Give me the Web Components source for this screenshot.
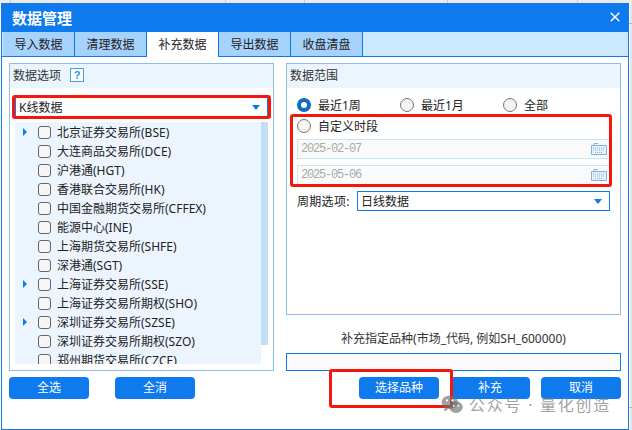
<!DOCTYPE html>
<html lang="zh">
<head>
<meta charset="utf-8">
<title>数据管理</title>
<style>
  html, body { margin: 0; height: 100%; overflow: hidden; }
  /* sheet behind the dialog: only its grid lines show round the edges */
  body { font: 12px "Noto Sans", "Noto Sans CJK SC", sans-serif; color: #222; background-color: #fff;
         background-image:
           linear-gradient(#ccc, #ccc), linear-gradient(#ccc, #ccc), linear-gradient(#ccc, #ccc),
           linear-gradient(#ccc, #ccc), linear-gradient(#ccc, #ccc),
           linear-gradient(#bbb, #bbb), linear-gradient(#bbb, #bbb),
           linear-gradient(#ececec, #ececec), linear-gradient(#e6e6e6, #e6e6e6);
         background-repeat: no-repeat;
         background-size: 1px 3px, 1px 3px, 1px 3px, 1px 3px, 1px 3px, 3px 1px, 3px 1px, 100% 3px, 2px 100%;
         background-position: 10px 0, 225px 0, 304px 0, 447px 0, 577px 0, 629px 23px, 629px 407px, 0 0, 630px 0; }
  data-dialog { margin: 3px 0 0 1px; }
</style>
</head>
<body>
<data-dialog heading="数据管理">
  <tab-bar slot="tabs" items="导入数据,清理数据,补充数据,导出数据,收盘清盘" active="2"></tab-bar>

  <group-panel slot="left" heading="数据选项" help>
    <combo-box wide text="K线数据"></combo-box>
    <market-tree>
      <tree-row arrow>北京证券交易所(BSE)</tree-row>
      <tree-row>大连商品交易所(DCE)</tree-row>
      <tree-row>沪港通(HGT)</tree-row>
      <tree-row>香港联合交易所(HK)</tree-row>
      <tree-row>中国金融期货交易所(CFFEX)</tree-row>
      <tree-row>能源中心(INE)</tree-row>
      <tree-row>上海期货交易所(SHFE)</tree-row>
      <tree-row>深港通(SGT)</tree-row>
      <tree-row arrow>上海证券交易所(SSE)</tree-row>
      <tree-row>上海证券交易所期权(SHO)</tree-row>
      <tree-row arrow>深圳证券交易所(SZSE)</tree-row>
      <tree-row>深圳证券交易所期权(SZO)</tree-row>
      <tree-row>郑州期货交易所(CZCE)</tree-row>
    </market-tree>
  </group-panel>

  <action-row slot="left-actions" gap="26">
    <blue-button>全选</blue-button>
    <blue-button>全消</blue-button>
  </action-row>

  <group-panel slot="right" heading="数据范围" tall>
    <range-form></range-form>
  </group-panel>

  <code-entry slot="right-extra" label="补充指定品种(市场_代码, 例如SH_600000)"></code-entry>

  <action-row slot="right-actions" gap="11" end>
    <blue-button>选择品种</blue-button>
    <blue-button>补充</blue-button>
    <blue-button>取消</blue-button>
  </action-row>
</data-dialog>

<red-mark style="left:12px;top:95px;width:259px;height:24px"></red-mark>
<red-mark style="left:290px;top:114px;width:322px;height:73px"></red-mark>
<red-mark style="left:329px;top:369px;width:124px;height:39px"></red-mark>
<water-mark></water-mark>

<script>
const FONT = '"Noto Sans", "Noto Sans CJK SC", sans-serif';

class DataDialog extends HTMLElement {
  constructor() {
    super();
    const root = this.attachShadow({ mode: 'open' });
    root.innerHTML = `
      <style>
        :host { display: block; width: 628px; height: 427px; box-sizing: border-box; background: #fff;
                border: solid #0f7aee; border-width: 0 1px 1px 1px; font-family: ${FONT}; }
        .title { height: 29px; background: #0f7aee; color: #fff; display: flex; align-items: center;
                 justify-content: space-between; padding: 0 8px 1px 10px; box-sizing: border-box;
                 font-size: 15px; font-weight: 700; }
        .body { display: grid; grid-template-columns: 265px 335px; column-gap: 12px; padding: 6px 0 0 7px; }
        .col { display: flex; flex-direction: column; }
        svg { display: block; }
      </style>
      <div class="title"><span></span>
        <svg width="10" height="10" viewBox="0 0 10 10"><path d="M.7.7l8.6 8.6M9.3.7L.7 9.3" stroke="#fff" stroke-width="1.4"/></svg>
      </div>
      <slot name="tabs"></slot>
      <div class="body">
        <div class="col"><slot name="left"></slot><slot name="left-actions"></slot></div>
        <div class="col"><slot name="right"></slot><slot name="right-extra"></slot><slot name="right-actions"></slot></div>
      </div>`;
    root.querySelector('.title span').textContent = this.getAttribute('heading');
  }
}
customElements.define('data-dialog', DataDialog);

class TabBar extends HTMLElement {
  constructor() {
    super();
    const root = this.attachShadow({ mode: 'open' });
    const active = Number(this.getAttribute('active'));
    const tabs = this.getAttribute('items').split(',').map((t, i) =>
      `<div class="tab${i === active ? ' on' : ''}">${t}</div>`).join('');
    root.innerHTML = `
      <style>
        :host { display: flex; height: 25px; box-sizing: border-box; padding-left: 1px; background: #cde9ff;
                border-bottom: 1px solid #0f7aee; }
        .tab { width: 71px; height: 24px; margin-right: 1px; background: #a6d3fd; text-align: center;
               font-size: 12px; line-height: 25px; color: #222; position: relative; }
        .tab::after { content: ""; position: absolute; right: -1px; top: 0; bottom: 0; width: 1px; background: #0f7aee; }
        .on { background: #fff; height: 25px; }
      </style>${tabs}`;
  }
}
customElements.define('tab-bar', TabBar);

class GroupPanel extends HTMLElement {
  constructor() {
    super();
    const root = this.attachShadow({ mode: 'open' });
    const help = this.hasAttribute('help') ? '<span class="help">?</span>' : '';
    root.innerHTML = `
      <style>
        :host { display: block; box-sizing: border-box; border: 1px solid #8cc0ea; height: 308px; }
        :host([tall]) { height: 252px; }
        .head { height: 24px; box-sizing: border-box; padding: 0 0 2px 3px; background: #ebf5fe; display: flex;
                align-items: center; font-size: 12px; color: #333; }
        .help { width: 12px; height: 12px; margin-left: 9px; border: 1px solid #4a9fe6; background: #fff; color: #2f8fe6;
                font: 700 11px/12px "Liberation Sans", sans-serif; text-align: center; }
      </style>
      <div class="head">${this.getAttribute('heading')}${help}</div>
      <slot></slot>`;
  }
}
customElements.define('group-panel', GroupPanel);

class ComboBox extends HTMLElement {
  constructor() {
    super();
    const root = this.attachShadow({ mode: 'open' });
    root.innerHTML = `
      <style>
        :host { display: flex; align-items: center; justify-content: space-between; box-sizing: border-box;
                height: 20px; width: 253px; margin: 9px 0 0 5px; padding: 0 7px 0 3px; border: 1px solid #0f7aee;
                background: #fff; font-size: 12px; color: #222; }
        i { border: solid transparent; border-width: 5px 4px 0; border-top-color: #0f7aee; margin-top: 1px; }
      </style>
      <span>${this.getAttribute('text')}</span><i></i>`;
  }
}
customElements.define('combo-box', ComboBox);

class MarketTree extends HTMLElement {
  constructor() {
    super();
    this.attachShadow({ mode: 'open' }).innerHTML = `
      <style>
        :host { display: block; position: relative; height: 242px; margin: 5px 0 0 5px; width: 253px;
                overflow: hidden; background: #fff; }
        .list { width: 246px; height: 100%; background: #ecf5fe; overflow: hidden; }
        .bar { position: absolute; right: 0; top: 0; width: 7px; height: 223px; background: #c3dff6; }
      </style>
      <div class="list"><slot></slot></div><div class="bar"></div>`;
  }
}
customElements.define('market-tree', MarketTree);

class TreeRow extends HTMLElement {
  constructor() {
    super();
    const arrow = this.hasAttribute('arrow') ? '<i></i>' : '';
    this.attachShadow({ mode: 'open' }).innerHTML = `
      <style>
        :host { display: block; height: 19px; }
        .row { display: flex; align-items: center; height: 19px; padding-top: 1px; box-sizing: border-box;
               font-size: 12px; color: #222; white-space: nowrap; }
        .a { width: 8px; margin: 0 7px 0 8px; height: 8px; display: flex; align-items: center; }
        i { border: solid transparent; border-width: 4px 0 4px 4px; border-left-color: #0f7aee; }
        b { width: 11px; height: 11px; border: 1px solid #666; border-radius: 3px; background: #f6f6f6; margin-right: 6px; flex: none; }
      </style>
      <div class="row"><span class="a">${arrow}</span><b></b><slot></slot></div>`;
  }
}
customElements.define('tree-row', TreeRow);

class ActionRow extends HTMLElement {
  constructor() {
    super();
    const gap = this.getAttribute('gap');
    this.attachShadow({ mode: 'open' }).innerHTML = `
      <style>
        :host { display: flex; gap: ${gap}px; margin-top: 6px; }
        :host([end]) { justify-content: flex-end; }
      </style><slot></slot>`;
  }
}
customElements.define('action-row', ActionRow);

class BlueButton extends HTMLElement {
  constructor() {
    super();
    this.attachShadow({ mode: 'open' }).innerHTML = `
      <style>
        :host { display: flex; align-items: center; justify-content: center; width: 80px; height: 22px;
                border-radius: 4px; background: #0f7aee; color: #fff; font-size: 12px; line-height: 14px; }
      </style><slot></slot>`;
  }
}
customElements.define('blue-button', BlueButton);

class RadioItem extends HTMLElement {
  constructor() {
    super();
    this.attachShadow({ mode: 'open' }).innerHTML = `
      <style>
        :host { display: flex; align-items: center; gap: 7px; font-size: 12px; color: #222; height: 16px; }
        b { width: 12px; height: 12px; border: 1px solid #777; border-radius: 50%; background: #f4f4f4; }
        :host([on]) b { width: 6px; height: 6px; border: 4px solid #0f6cc4; background: #fff; }
      </style><b></b><slot></slot>`;
  }
}
customElements.define('radio-item', RadioItem);

class DateInput extends HTMLElement {
  constructor() {
    super();
    this.attachShadow({ mode: 'open' }).innerHTML = `
      <style>
        :host { display: flex; align-items: center; justify-content: space-between; box-sizing: border-box;
                height: 20px; width: 312px; padding: 0 2px 0 3px; border: 1px solid #c8e6fa; border-right: 0;
                background: #fafafa; color: #aaa; font: 12px "Liberation Mono", monospace; letter-spacing: -1.2px; }
        svg { display: block; }
      </style>
      <span>${this.getAttribute('value')}</span>
      <svg width="16" height="12" viewBox="0 0 16 12" fill="none" stroke="#7fb0e6">
        <path d="M.5 2.5h15v9H.5zM3 2.5V.5h4" fill="#eaf3fc"/>
        <path d="M2 5h12M2 7h12M4 9.5h8" stroke-dasharray="1 1"/>
      </svg>`;
  }
}
customElements.define('date-input', DateInput);

class RangeForm extends HTMLElement {
  constructor() {
    super();
    this.attachShadow({ mode: 'open' }).innerHTML = `
      <style>
        :host { display: block; padding: 9px 0 0 10px; }
        .radios { display: grid; grid-template-columns: 103px 103px auto; }
        .stack { display: flex; flex-direction: column; gap: 6px; margin-top: 5px; }
        .custom { margin-top: 5px; }
        .period { display: flex; align-items: center; margin-top: 6px; font-size: 12px; color: #222; white-space: nowrap; }
        .period span { width: 60px; letter-spacing: .3px; }
        .period combo-box { margin: 0; }
      </style>
      <div class="radios">
        <radio-item on>最近1周</radio-item>
        <radio-item>最近1月</radio-item>
        <radio-item>全部</radio-item>
      </div>
      <radio-item class="custom">自定义时段</radio-item>
      <div class="stack">
        <date-input value="2025-02-07"></date-input>
        <date-input value="2025-05-06"></date-input>
      </div>
      <div class="period"><span>周期选项:</span><combo-box text="日线数据"></combo-box></div>`;
  }
}
customElements.define('range-form', RangeForm);

class CodeEntry extends HTMLElement {
  constructor() {
    super();
    this.attachShadow({ mode: 'open' }).innerHTML = `
      <style>
        :host { display: block; margin-top: 14px; }
        .l { height: 20px; text-align: center; font-size: 12px; line-height: 20px; color: #333; white-space: nowrap; }
        .i { box-sizing: border-box; height: 18px; margin-top: 4px; border: 1px solid #0f7aee; background: #fafafa; }
      </style>
      <div class="l">${this.getAttribute('label')}</div><div class="i"></div>`;
  }
}
customElements.define('code-entry', CodeEntry);

class RedMark extends HTMLElement {
  constructor() {
    super();
    this.attachShadow({ mode: 'open' }).innerHTML = `
      <style>
        :host { display: block; position: absolute; box-sizing: border-box; border: 3px solid #f5160c; border-radius: 3px; }
      </style>`;
  }
}
customElements.define('red-mark', RedMark);

class WaterMark extends HTMLElement {
  constructor() {
    super();
    this.attachShadow({ mode: 'open' }).innerHTML = `
      <style>
        :host { display: flex; align-items: center; gap: 5px; position: absolute; left: 440px; top: 399px; height: 13px;
                color: rgba(120,120,120,.7); font-size: 16px; line-height: 13px; letter-spacing: 1.75px; white-space: nowrap; }
        svg { display: block; margin-top: -4px; flex: none; }
      </style>
      <svg width="24" height="18" viewBox="0 0 24 20" fill="rgba(110,110,110,.65)">
        <ellipse cx="9.5" cy="8" rx="9" ry="7.5"/>
        <ellipse cx="16.5" cy="13.5" rx="7.5" ry="6.5"/>
        <path d="M3 18l1-5 4 3z"/>
        <circle cx="6.5" cy="6" r="1.2" fill="#fff"/><circle cx="12.5" cy="6" r="1.2" fill="#fff"/>
        <circle cx="14" cy="12" r="1" fill="#fff"/><circle cx="19" cy="12" r="1" fill="#fff"/>
      </svg>
      <span>公众号 · 量化创造</span>`;
  }
}
customElements.define('water-mark', WaterMark);
</script>
</body>
</html>
